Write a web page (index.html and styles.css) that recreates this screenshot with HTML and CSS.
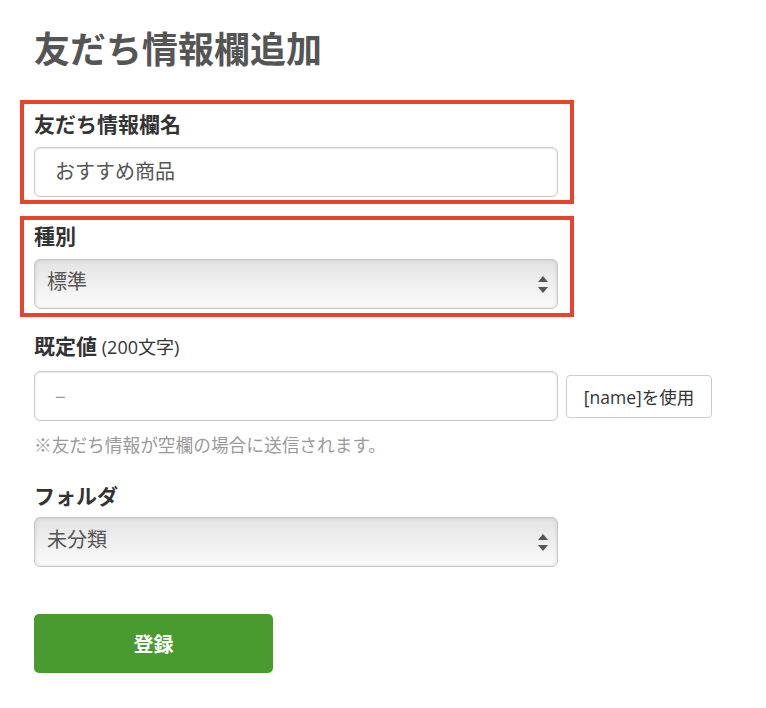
FILE: index.html
```html
<!DOCTYPE html>
<html lang="ja">
<head>
<meta charset="utf-8">
<title>友だち情報欄追加</title>
<link rel="stylesheet" href="styles.css">
</head>
<body>
<main class="page">
  <h1 class="title">友だち情報欄追加</h1>
  <form class="form">
    <div class="field field--hl field--first">
      <label class="label">友だち情報欄名</label>
      <input class="input" type="text" value="おすすめ商品">
    </div>
    <div class="field field--hl field--second">
      <label class="label">種別</label>
      <div class="select-wrap">
        <div class="select">標準</div>
        <svg class="arrows" width="10" height="17" viewBox="0 0 10 17"><path d="M5 0 L10 6 L0 6 Z M0 11 L10 11 L5 17 Z" fill="#555"/></svg>
      </div>
    </div>
    <div class="field field--default">
      <label class="label">既定値 <span class="label-note">(200文字)</span></label>
      <div class="row">
        <input class="input" type="text" placeholder="–">
        <button type="button" class="btn-name">[name]を使用</button>
      </div>
      <p class="help">※友だち情報が空欄の場合に送信されます。</p>
    </div>
    <div class="field field--folder">
      <label class="label">フォルダ</label>
      <div class="select-wrap">
        <div class="select">未分類</div>
        <svg class="arrows" width="10" height="17" viewBox="0 0 10 17"><path d="M5 0 L10 6 L0 6 Z M0 11 L10 11 L5 17 Z" fill="#555"/></svg>
      </div>
    </div>
    <button type="button" class="submit">登録</button>
  </form>
</main>
</body>
</html>
```
FILE: styles.css
```css
* { box-sizing: border-box; }
body {
  margin: 0;
  background: #fff;
  font-family: "Noto Sans CJK JP", "Noto Sans", sans-serif;
  color: #333;
}
.page {
  padding-left: 34px;
  width: 558px;
}
.title {
  margin: 26px 0 32px;
  font-size: 36px;
  line-height: 42px;
  font-weight: 700;
  color: #555;
  letter-spacing: 0;
}
.form { display: flex; flex-direction: column; }
.field { display: flex; flex-direction: column; }
.field--hl {
  margin: 0 -16px 0 -14px;
  padding: 0 12px 3px 10px;
  border: 4px solid #e8442b;
}
.field--first { padding-top: 5px; }
.field--second { margin-top: 12px; padding-top: 1px; padding-bottom: 4px; }
.field--default { margin-top: 14px; }
.field--folder { margin-top: 25px; }
.label {
  display: block;
  font-size: 21px;
  line-height: 28px;
  font-weight: 700;
  color: #333;
  margin-bottom: 10px;
}
.field--folder .label { margin-bottom: 8px; }
.label-note {
  font-size: 18px;
  font-weight: 400;
  font-family: "Open Sans", "Noto Sans CJK JP", sans-serif;
}
.input {
  width: 524px;
  height: 50px;
  flex: none;
  border: 1px solid #c9c9c9;
  border-radius: 6px;
  padding: 0 20px 4px;
  font-family: inherit;
  font-size: 20px;
  color: #555;
  background: #fff;
  box-shadow: inset 0 1px 2px rgba(0,0,0,0.08);
  outline: none;
}
.input::placeholder { color: #999; }
.select-wrap { position: relative; width: 524px; }
.select {
  height: 50px;
  border: 1px solid #c6c6c6;
  border-radius: 6px;
  padding: 0 12px 8px;
  display: flex;
  align-items: center;
  font-size: 20px;
  color: #555;
  background: linear-gradient(#e3e3e3, #fbfbfb);
  box-shadow: inset 0 0 4px rgba(0,0,0,0.12);
}
.arrows {
  position: absolute;
  right: 10px;
  top: 17px;
}
.row {
  display: flex;
  align-items: center;
  gap: 8px;
}
.btn-name {
  flex: none;
  width: 146px;
  height: 43px;
  border: 1px solid #cdcdcd;
  border-radius: 4px;
  background: #fff;
  font-family: "Open Sans", "Noto Sans CJK JP", sans-serif;
  font-size: 17.5px;
  color: #333;
  padding: 0;
}
.help {
  margin: 11px 0 0;
  font-size: 17.7px;
  line-height: 24px;
  color: #9a9a9a;
}
.submit {
  margin-top: 47px;
  width: 239px;
  height: 59px;
  border: none;
  border-radius: 5px;
  background: #4a9b2f;
  color: #fff;
  font-family: inherit;
  font-size: 20px;
  font-weight: 700;
  padding: 0;
}
```
